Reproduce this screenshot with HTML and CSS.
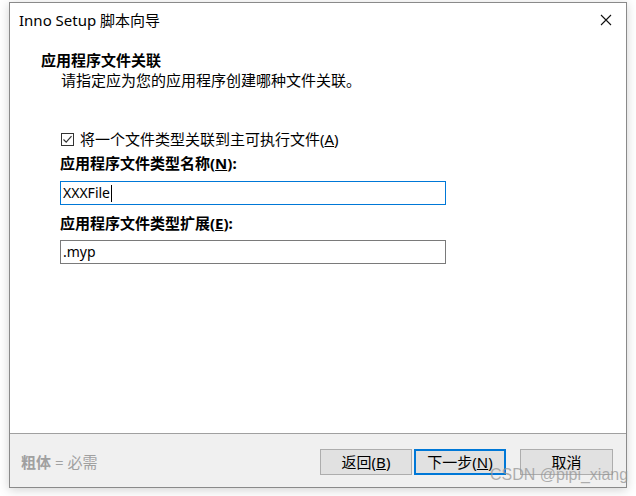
FILE: index.html
```html
<!DOCTYPE html>
<html lang="zh-CN">
<head>
    <meta charset="UTF-8">
    <title>Inno Setup 脚本向导</title>
    <link rel="stylesheet" href="styles.css">
</head>
<body>
    <div class="window">
        <div class="titlebar">
            <span class="title">Inno Setup 脚本向导</span>
            <svg class="close" width="12" height="12" viewBox="0 0 12 12">
                <path d="M1 1 L11 11 M11 1 L1 11" stroke="#111" stroke-width="1.1" fill="none"/>
            </svg>
        </div>
        <div class="header">
            <div class="heading">应用程序文件关联</div>
            <div class="subtitle">请指定应为您的应用程序创建哪种文件关联。</div>
        </div>
        <div class="content">
            <label class="check-row">
                <span class="checkbox">
                    <svg width="11" height="11" viewBox="0 0 11 11">
                        <path d="M1.5 5.5 L4.2 8.2 L9.5 2.2" stroke="#333" stroke-width="1.2" fill="none"/>
                    </svg>
                </span>
                <span>将一个文件类型关联到主可执行文件(<u>A</u>)</span>
            </label>
            <div class="field-label">应用程序文件类型名称(<u>N</u>):</div>
            <div class="input focused">XXXFile<span class="caret"></span></div>
            <div class="field-label second">应用程序文件类型扩展(<u>E</u>):</div>
            <div class="input">.myp</div>
        </div>
        <div class="footer">
            <div class="hint"><b>粗体</b> = 必需</div>
            <div class="buttons">
                <button class="btn">返回(<u>B</u>)</button>
                <button class="btn default">下一步(<u>N</u>)</button>
                <button class="btn cancel">取消</button>
            </div>
        </div>
    </div>
    <div class="watermark">CSDN @pipi_xiang</div>
</body>
</html>
```
FILE: styles.css
```css
body {
    margin: 0;
    width: 636px;
    height: 496px;
    background: #fff;
    font-family: "Noto Sans", "Noto Sans CJK SC", sans-serif;
    font-size: 15px;
    color: #000;
    position: relative;
    overflow: hidden;
}
.window {
    margin: 2px 0 0 9px;
    width: 616px;
    height: 484px;
    border: 1px solid #8a8a8a;
    background: #fff;
    display: flex;
    flex-direction: column;
    box-shadow: 0 2px 10px rgba(0, 0, 0, 0.18);
}
.titlebar {
    height: 34px;
    display: flex;
    align-items: center;
    justify-content: space-between;
    padding: 0 14px 0 9px;
}
.title {
    font-size: 15px;
    line-height: 20px;
}
.header {
    padding: 13px 0 0 31px;
    line-height: 20px;
}
.heading {
    font-weight: bold;
}
.subtitle {
    padding-left: 20px;
}
.content {
    flex: 1;
    padding: 39px 0 0 50px;
    line-height: 20px;
}
.check-row {
    display: flex;
    align-items: center;
    gap: 6px;
}
.checkbox {
    width: 11px;
    height: 11px;
    border: 1px solid #333;
    display: flex;
    margin-left: 1px;
}
.field-label {
    font-weight: bold;
    margin-top: 4px;
}
.field-label.second {
    margin-top: 8px;
}
.input {
    width: 382px;
    height: 22px;
    border: 1px solid #7a7a7a;
    margin-top: 7px;
    padding-left: 2px;
    line-height: 22px;
    font-size: 14px;
    display: flex;
    align-items: center;
}
.input.focused {
    border-color: #0078d7;
    margin-top: 8px;
}
.caret {
    width: 1px;
    height: 17px;
    background: #000;
    margin-left: 1px;
}
.footer {
    height: 53px;
    border-top: 1px solid #a0a0a0;
    background: #f0f0f0;
    display: flex;
    align-items: center;
    justify-content: space-between;
    padding: 0 13px 0 11px;
}
.hint {
    color: #a0a0a0;
    padding-top: 2px;
}
.buttons {
    display: flex;
    align-items: center;
    gap: 2px;
    padding-top: 2px;
}
.btn {
    width: 92px;
    height: 26px;
    background: #e1e1e1;
    border: 1px solid #adadad;
    font-family: inherit;
    font-size: 15px;
    color: #000;
    padding: 0;
}
.btn.default {
    border: 2px solid #0078d7;
}
.btn.cancel {
    width: 93px;
    margin-left: 12px;
}
.watermark {
    position: absolute;
    left: 490px;
    top: 466px;
    font-family: "Liberation Sans", sans-serif;
    font-size: 16px;
    color: rgba(150, 150, 150, 0.75);
}
```
